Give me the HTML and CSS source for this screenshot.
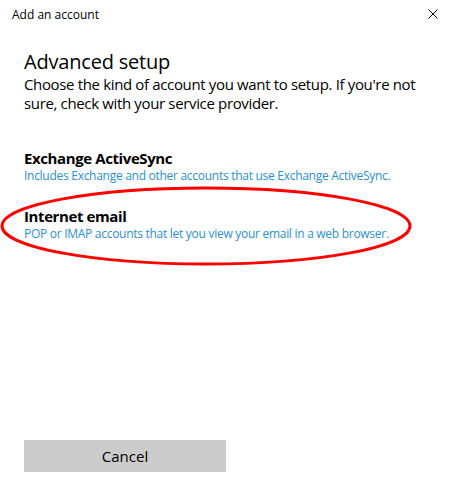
FILE: index.html
```html
<!DOCTYPE html>
<html>
<head>
<meta charset="utf-8">
<link rel="stylesheet" href="styles.css">
</head>
<body>
<div class="window">
  <div class="titlebar">
    <span class="title">Add an account</span>
    <svg class="close" width="10" height="10" viewBox="0 0 10 10"><path d="M0.5 0.5 L9.5 9.5 M9.5 0.5 L0.5 9.5" stroke="#000" stroke-width="1" fill="none"/></svg>
  </div>
  <div class="content">
    <h1 class="heading">Advanced setup</h1>
    <p class="intro">Choose the kind of account you want to setup. If you're not sure, check with your service provider.</p>
    <div class="options">
      <div class="option">
        <div class="opt-title">Exchange ActiveSync</div>
        <div class="opt-desc">Includes Exchange and other accounts that use Exchange ActiveSync.</div>
      </div>
      <div class="option marked">
        <div class="opt-title">Internet email</div>
        <div class="opt-desc">POP or IMAP accounts that let you view your email in a web browser.</div>
        <svg class="ring" width="416" height="84" viewBox="0 0 416 84"><ellipse cx="206" cy="42" rx="204" ry="38" fill="none" stroke="#f00" stroke-width="3"/></svg>
      </div>
    </div>
    <div class="spacer"></div>
    <div class="footer">
      <button class="cancel">Cancel</button>
    </div>
  </div>
</div>
</body>
</html>
```

FILE: styles.css
```css
html, body {
  margin: 0;
  padding: 0;
  background: #fff;
}
body {
  font-family: "Open Sans", "Noto Sans", sans-serif;
  color: #000;
}
.window {
  width: 455px;
  height: 487px;
  display: flex;
  flex-direction: column;
}
.titlebar {
  height: 30px;
  display: flex;
  align-items: center;
  justify-content: space-between;
  padding: 0 17px 0 12px;
  box-sizing: border-box;
}
.title {
  font-size: 12px;
  margin-top: -2px;
}
.close {
  margin-top: -2px;
}
.content {
  flex: 1;
  display: flex;
  flex-direction: column;
  padding: 0 24px 15px 24px;
}
.heading {
  font-size: 20px;
  font-weight: normal;
  margin: 19px 0 0 0;
  line-height: 26px;
  letter-spacing: -0.2px;
}
.intro {
  font-size: 15px;
  line-height: 19px;
  margin: 0;
  letter-spacing: -0.35px;
}
.options {
  margin-top: 35px;
  display: flex;
  flex-direction: column;
  gap: 22px;
}
.option {
  position: relative;
}
.opt-title {
  font-size: 15px;
  font-weight: 700;
  line-height: 20px;
  letter-spacing: -0.4px;
}
.opt-desc {
  font-size: 12px;
  line-height: 16px;
  color: #2b8fd0;
  letter-spacing: -0.28px;
}
.ring {
  position: absolute;
  left: -24px;
  top: -22px;
}
.spacer {
  flex: 1;
}
.footer {
  display: flex;
}
.cancel {
  width: 202px;
  height: 32px;
  background: #cccccc;
  border: none;
  font-family: "Open Sans", "Noto Sans", sans-serif;
  font-size: 15px;
  color: #000;
  padding: 0;
}
```
